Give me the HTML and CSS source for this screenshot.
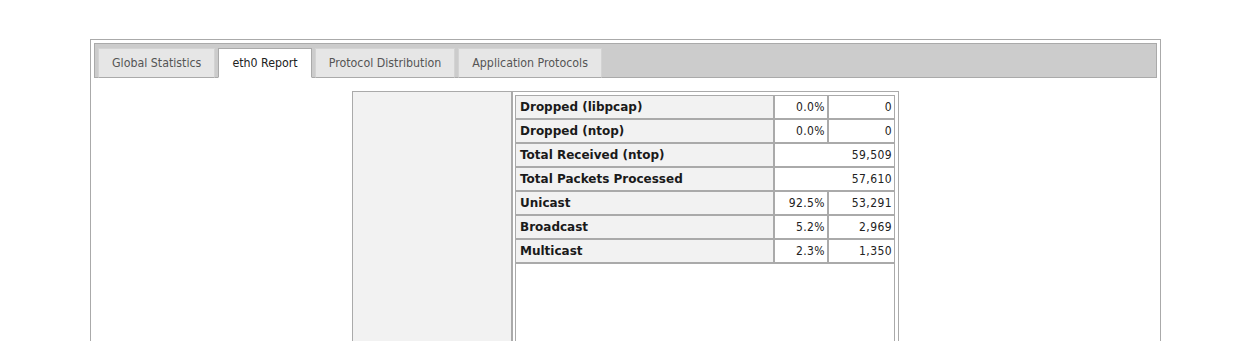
FILE: index.html
```html
<!DOCTYPE html>
<html>
<head>
<meta charset="utf-8">
<title>eth0 Report</title>
<link rel="stylesheet" href="styles.css">
</head>
<body>
<div class="page">
  <div class="panel">
    <ul class="tabs">
      <li class="tab">Global Statistics</li>
      <li class="tab active">eth0 Report</li>
      <li class="tab">Protocol Distribution</li>
      <li class="tab">Application Protocols</li>
    </ul>
    <div class="report">
      <div class="side"></div>
      <div class="main">
        <table class="stats">
          <colgroup><col class="c-label"><col class="c-pct"><col class="c-val"></colgroup>
          <tr><th>Dropped (libpcap)</th><td>0.0%</td><td>0</td></tr>
          <tr><th>Dropped (ntop)</th><td>0.0%</td><td>0</td></tr>
          <tr><th>Total Received (ntop)</th><td colspan="2">59,509</td></tr>
          <tr><th>Total Packets Processed</th><td colspan="2">57,610</td></tr>
          <tr><th>Unicast</th><td>92.5%</td><td>53,291</td></tr>
          <tr><th>Broadcast</th><td>5.2%</td><td>2,969</td></tr>
          <tr><th>Multicast</th><td>2.3%</td><td>1,350</td></tr>
          <tr class="empty"><td colspan="3"></td></tr>
        </table>
      </div>
    </div>
  </div>
</div>
</body>
</html>
```
FILE: styles.css
```css
html, body {
  margin: 0;
  padding: 0;
  background: #ffffff;
  font-family: "DejaVu Sans Condensed", "DejaVu Sans", sans-serif;
  font-size: 12px;
  color: #222222;
}

.page {
  padding-top: 39px;
  padding-left: 90px;
}

.panel {
  width: 1071px;
  box-sizing: border-box;
  border: 1px solid #aaaaaa;
  padding: 3px;
  height: 340px;
  background: #ffffff;
}

.tabs {
  list-style: none;
  margin: 0;
  padding: 4px 3px 0;
  height: 35px;
  box-sizing: border-box;
  display: flex;
  align-items: flex-end;
  gap: 3px;
  background: #cccccc;
  border: 1px solid #aaaaaa;
}

.tab {
  height: 30px;
  box-sizing: border-box;
  margin-bottom: -1px;
  padding: 0 13px 1px;
  display: flex;
  align-items: center;
  background: #e6e6e6;
  border: 1px solid #d3d3d3;
  border-bottom: 1px solid #aaaaaa;
  color: #555555;
  font-size: 12.3px;
  white-space: nowrap;
}

.tab.active {
  background: #ffffff;
  border-color: #aaaaaa;
  border-bottom-color: #ffffff;
  color: #212121;
}

.report {
  display: flex;
  width: 547px;
  margin: 13px auto 0;
}

.side {
  width: 160px;
  height: 300px;
  box-sizing: border-box;
  background: #f2f2f2;
  border: 1px solid #aaaaaa;
}

.main {
  width: 387px;
  height: 300px;
  box-sizing: border-box;
  border: 1px solid #aaaaaa;
  padding: 3px 3px 0 2px;
}

.stats {
  width: 380px;
  border-collapse: separate;
  border-spacing: 0;
  table-layout: fixed;
}

.c-label { width: 259px; }
.c-pct { width: 54px; }
.c-val { width: 67px; }

.stats th,
.stats td {
  height: 24px;
  box-sizing: border-box;
  border: 1px solid #aaaaaa;
  padding: 0 2px 0 4px;
  font-size: 12px;
  white-space: nowrap;
}

.stats th {
  background: #f2f2f2;
  text-align: left;
  font-family: "DejaVu Sans", sans-serif;
  font-weight: bold;
  color: #1a1a1a;
}

.stats td {
  background: #ffffff;
  text-align: right;
  letter-spacing: 0.4px;
  color: #222222;
}

.stats .empty td {
  height: 100px;
}
```
